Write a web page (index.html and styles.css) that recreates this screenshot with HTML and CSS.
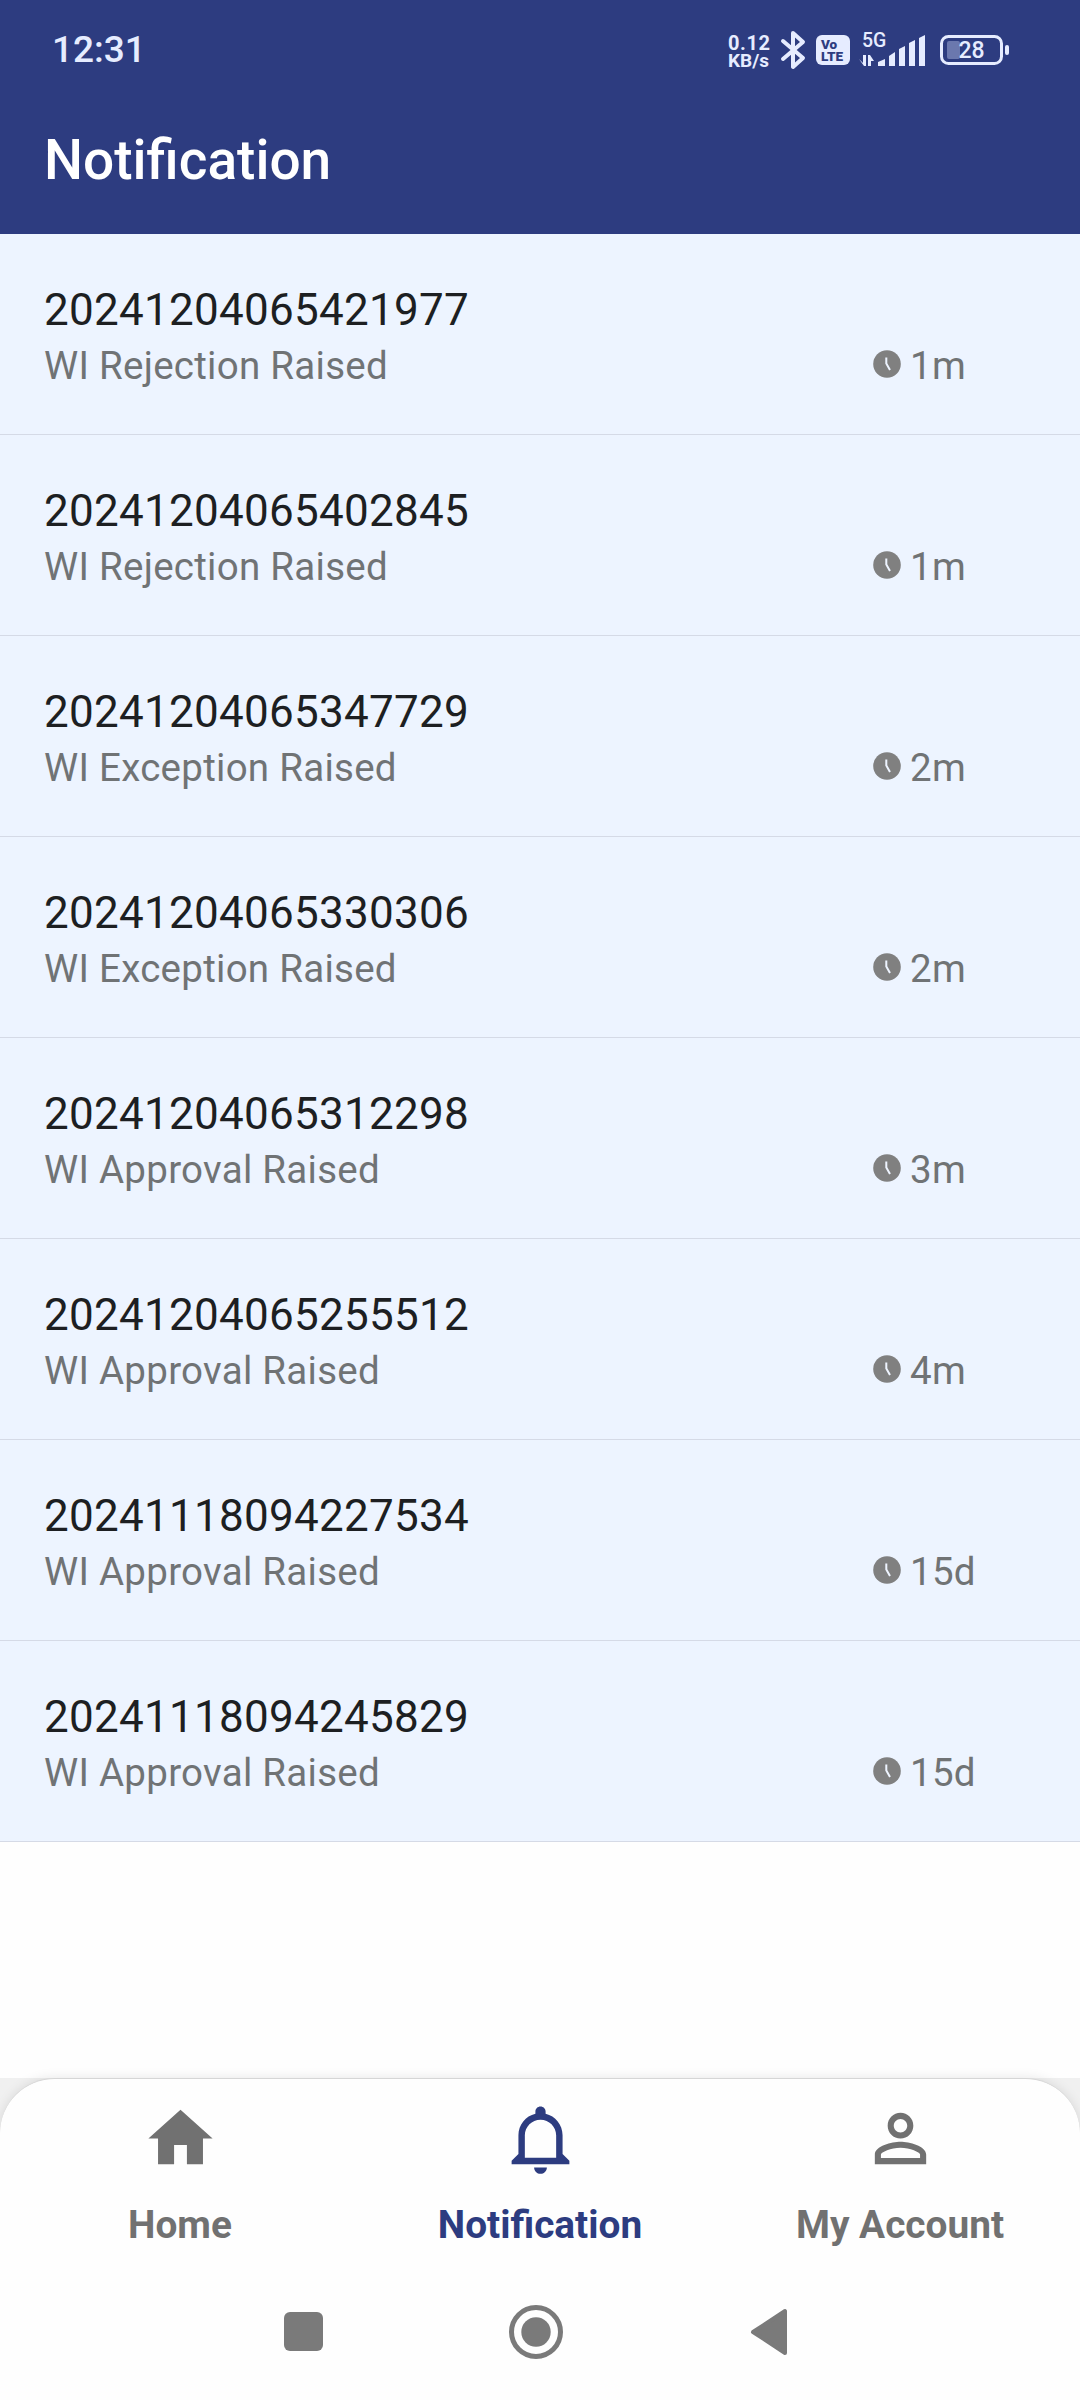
FILE: index.html
```html
<!DOCTYPE html>
<html lang="en">
<head>
    <meta charset="UTF-8">
    <meta name="viewport" content="width=device-width, initial-scale=1.0">
    <title>Notification</title>
    <link rel="stylesheet" href="styles.css">
</head>
<body>
    <div class="status-bar">
        <div class="clock">12:31</div>
        <div class="status-icons">
            <div class="net-speed"><span class="rate">0.12</span><span>KB/s</span></div>
            <svg class="bluetooth" width="26" height="40" viewBox="0 0 26 40">
                <path d="M3 11 L23 28 L13 37 V3 L23 12 L3 29" fill="none" stroke="#e6ecff" stroke-width="4" stroke-linejoin="round" stroke-linecap="round"/>
            </svg>
            <div class="volte"><span>Vo</span><span>LTE</span></div>
            <svg class="signal" width="68" height="40" viewBox="0 -4 68 40">
                <text x="3" y="13" class="signal-type">5G</text>
                <g fill="#e6ecff">
                    <path d="M0 25 L4 29 V21 H7 V32 H5 Z"/>
                    <path d="M9 32 V21 H11 L15 27 H12 V32 Z"/>
                    <path d="M19 32 V28 L26 25 V32 Z"/>
                    <path d="M30 32 V22 L36 18 V32 Z"/>
                    <path d="M40 32 V15 L46 12 V32 Z"/>
                    <path d="M50 32 V9 L56 6 V32 Z"/>
                    <path d="M60 32 V4 L66 1 V32 Z"/>
                </g>
            </svg>
            <svg class="battery" width="70" height="30" viewBox="0 0 70 30">
                <rect x="1.5" y="1.5" width="60" height="27" rx="7" fill="none" stroke="#e6ecff" stroke-width="3"/>
                <rect x="7" y="6" width="13" height="18" rx="2" fill="#6b78ae"/>
                <rect x="65" y="10" width="4" height="10" rx="2" fill="#e6ecff"/>
                <text x="31.5" y="23" text-anchor="middle" class="battery-level">28</text>
            </svg>
        </div>
    </div>

    <div class="header">
        <h1>Notification</h1>
    </div>

    <div class="list" id="list"></div>

    <div class="bottom">
        <div class="tabs">
            <div class="tab">
                <svg viewBox="0 0 24 24"><path d="M10 20v-6h4v6h5v-8h3L12 3 2 12h3v8z"/></svg>
                <span>Home</span>
            </div>
            <div class="tab active">
                <svg viewBox="0 0 24 24"><path d="M10.01 21.01c0 1.1.89 1.99 1.99 1.99s1.99-.89 1.99-1.99h-3.98zm8.87-4.19V11c0-3.25-2.25-5.97-5.29-6.69v-.72C13.59 2.71 12.88 2 12 2s-1.59.71-1.59 1.59v.72C7.37 5.03 5.12 7.75 5.12 11v5.82L3 18.94V20h18v-1.06l-2.12-2.12zM16.88 18H7.12v-7c0-2.69 2.19-4.88 4.88-4.88s4.88 2.19 4.88 4.88v7z"/></svg>
                <span>Notification</span>
            </div>
            <div class="tab">
                <svg viewBox="0 0 24 24"><path d="M12 5.9c1.16 0 2.1.94 2.1 2.1s-.94 2.1-2.1 2.1S9.9 9.16 9.9 8s.94-2.1 2.1-2.1m0 9c2.97 0 6.1 1.46 6.1 2.1v1.1H5.9V17c0-.64 3.13-2.1 6.1-2.1M12 4C9.79 4 8 5.79 8 8s1.79 4 4 4 4-1.79 4-4-1.79-4-4-4zm0 9c-2.67 0-8 1.34-8 4v3h16v-3c0-2.66-5.33-4-8-4z"/></svg>
                <span>My Account</span>
            </div>
        </div>
        <div class="system-nav">
            <div class="recents"></div>
            <svg class="home-key" width="56" height="56" viewBox="0 0 56 56">
                <circle cx="28" cy="28" r="24.5" fill="none" stroke="#7a7a7a" stroke-width="5"/>
                <circle cx="28" cy="28" r="14.7" fill="#7a7a7a"/>
            </svg>
            <svg class="back-key" width="38" height="48" viewBox="0 0 38 48">
                <path d="M3 24 L35 3 V45 Z" fill="#7a7a7a" stroke="#7a7a7a" stroke-width="4" stroke-linejoin="round"/>
            </svg>
        </div>
    </div>

    <script>
        const notifications = [
            ['20241204065421977', 'WI Rejection Raised', '1m'],
            ['20241204065402845', 'WI Rejection Raised', '1m'],
            ['20241204065347729', 'WI Exception Raised', '2m'],
            ['20241204065330306', 'WI Exception Raised', '2m'],
            ['20241204065312298', 'WI Approval Raised', '3m'],
            ['20241204065255512', 'WI Approval Raised', '4m'],
            ['20241118094227534', 'WI Approval Raised', '15d'],
            ['20241118094245829', 'WI Approval Raised', '15d']
        ];

        document.getElementById('list').innerHTML = notifications
            .map(([id, message, age]) => `
                <div class="item">
                    <div class="item-id">${id}</div>
                    <div class="item-row">
                        <div class="item-message">${message}</div>
                        <div class="item-time">
                            <svg width="28" height="28" viewBox="0 0 28 28">
                                <circle cx="14" cy="14" r="13.8" fill="#808080"/>
                                <path d="M13.3 7.5 V13.5 L17 20" fill="none" stroke="#eef4ff" stroke-width="2"/>
                            </svg>
                            <span>${age}</span>
                        </div>
                    </div>
                </div>
            `).join('');
    </script>
</body>
</html>
```
FILE: styles.css
```css
body {
    margin: 0;
    width: 1080px;
    height: 2400px;
    display: flex;
    flex-direction: column;
    overflow: hidden;
    background: #fefefe;
    font-family: Roboto, sans-serif;
}
.status-bar {
    height: 99px;
    box-sizing: border-box;
    padding: 0 70px 0 52px;
    display: flex;
    justify-content: space-between;
    align-items: center;
    background: #2d3c80;
    color: #e6ecff;
}
.clock {
    font-size: 37px;
    font-weight: 500;
}
.status-icons {
    display: flex;
    align-items: center;
}
.net-speed {
    width: 44px;
    display: flex;
    flex-direction: column;
    margin-right: 8px;
    padding-top: 5px;
    font-size: 19px;
    line-height: 18.5px;
    font-weight: 700;
}
.rate {
    font-size: 20px;
    letter-spacing: 0.6px;
}
.bluetooth {
    margin-right: 10px;
}
.volte {
    width: 34px;
    height: 30px;
    margin-right: 9px;
    display: flex;
    flex-direction: column;
    justify-content: center;
    padding-left: 5px;
    box-sizing: border-box;
    border-radius: 6px;
    background: #e6ecff;
    color: #2d3c80;
    font-size: 13.5px;
    line-height: 12px;
    font-weight: 900;
}
.signal {
    margin-right: 13px;
}
.signal-type {
    fill: #e6ecff;
    font-size: 19.5px;
    font-weight: 500;
}
.battery-level {
    fill: #e6ecff;
    font-size: 23px;
    font-weight: 500;
}
.header {
    height: 135px;
    padding-left: 44px;
    background: #2d3c80;
    color: #fff;
}
.header h1 {
    margin: 0;
    padding-top: 28px;
    font-size: 55px;
    line-height: 66px;
    font-weight: 500;
}
.item {
    height: 201px;
    box-sizing: border-box;
    padding: 50px 0 0 44px;
    background: #edf4ff;
    border-bottom: 1px solid #d5dae6;
}
.item-id {
    font-size: 44px;
    line-height: 52px;
    letter-spacing: 0.27px;
    color: #1d1f22;
}
.item-row {
    display: flex;
    justify-content: space-between;
    padding-top: 7px;
    font-size: 38.5px;
    line-height: 46px;
    letter-spacing: 0.27px;
    color: #707375;
}
.item-time {
    width: 207px;
    display: flex;
    gap: 9px;
}
.item-time svg {
    margin-top: 7px;
}
.bottom {
    margin-top: auto;
    height: 322px;
    background: #f0f0f0;
}
.tabs {
    height: 178px;
    display: flex;
    border-top: 1px solid #d6d6d6;
    border-radius: 55px 55px 0 0;
    background: #fefefe;
    box-shadow: 0 0 12px rgba(0,0,0,0.1);
}
.tab {
    flex: 1;
    display: flex;
    flex-direction: column;
    align-items: center;
    padding-top: 21px;
    font-size: 38.8px;
    line-height: 46px;
    font-weight: 700;
    color: #717171;
}
.tab svg {
    width: 77px;
    height: 77px;
    margin-bottom: 25px;
    fill: currentColor;
}
.tab.active {
    color: #2d3c80;
}
.system-nav {
    position: relative;
    height: 143px;
    display: flex;
    align-items: center;
    box-sizing: border-box;
    padding: 6px 0 0 284px;
    background: #fefefe;
}
.recents {
    width: 39px;
    height: 39px;
    border-radius: 6px;
    background: #7a7a7a;
}
.home-key {
    margin-left: 185px;
}
.back-key {
    margin-left: 186px;
}
```
